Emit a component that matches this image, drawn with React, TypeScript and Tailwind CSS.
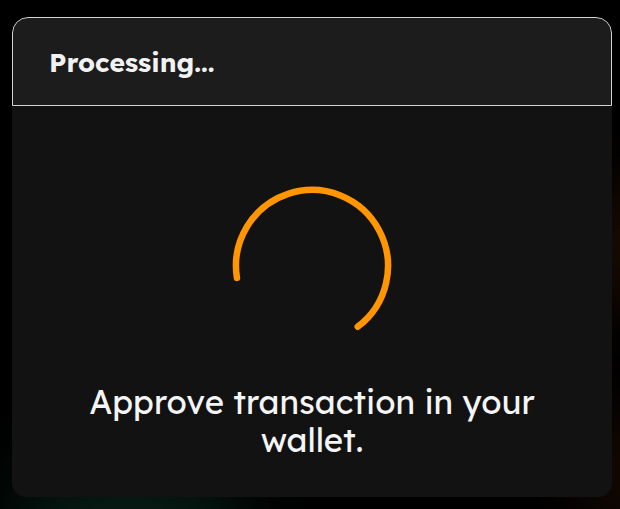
import { type ReactNode } from "react";

function Spinner() {
  // arc from ~171deg clockwise to ~413deg (53deg), centre (80,80), r 76
  const r = 76;
  const cx = 80;
  const cy = 80;
  const a0 = (171 * Math.PI) / 180;
  const a1 = (53 * Math.PI) / 180;
  const x0 = cx + r * Math.cos(a0);
  const y0 = cy + r * Math.sin(a0);
  const x1 = cx + r * Math.cos(a1);
  const y1 = cy + r * Math.sin(a1);
  return (
    <svg width="160" height="160" viewBox="0 0 160 160" className="overflow-visible">
      <path
        d={`M ${x0} ${y0} A ${r} ${r} 0 1 1 ${x1} ${y1}`}
        fill="none"
        stroke="#ff9500"
        strokeWidth="6.5"
        strokeLinecap="round"
      />
    </svg>
  );
}

function Modal({ title, children }: { title: string; children: ReactNode }) {
  return (
    <div className="relative ml-3 mt-[17px] flex h-[480px] w-[600px] flex-col overflow-hidden rounded-t-[16px] rounded-b-[14px] bg-[#121212]">
      <div className="flex h-[89px] shrink-0 items-start rounded-t-[16px] border border-[#d4d4d4] bg-[#1c1c1c] px-9 pt-[27px]">
        <h2 className="text-[26.5px] font-bold leading-[34px] text-[#f2f2f2]">{title}</h2>
      </div>
      {children}
    </div>
  );
}

export default function App() {
  return (
    <div
      className="relative h-[509px] w-[620px] overflow-hidden bg-black"
      style={{ fontFamily: '"Lexend", Inter, "Noto Sans", sans-serif' }}
    >
      <div className="pointer-events-none absolute -bottom-16 left-4 h-28 w-56 rounded-full bg-[#0d3b2c] opacity-50 blur-2xl" />
      <div className="pointer-events-none absolute right-[-40px] top-[190px] h-28 w-16 rounded-full bg-[#5a2a10] opacity-50 blur-2xl" />
      <div className="pointer-events-none absolute bottom-[-20px] right-[-40px] h-28 w-16 rounded-full bg-[#5a2a10] opacity-40 blur-2xl" />
      <Modal title="Processing...">
        <div className="flex flex-col items-center pt-[80px]">
          <Spinner />
          <p className="mt-[37px] w-[480px] text-center text-[33px] leading-[38px] text-[#f5f5f5]">
            Approve transaction in your wallet.
          </p>
        </div>
      </Modal>
    </div>
  );
}
